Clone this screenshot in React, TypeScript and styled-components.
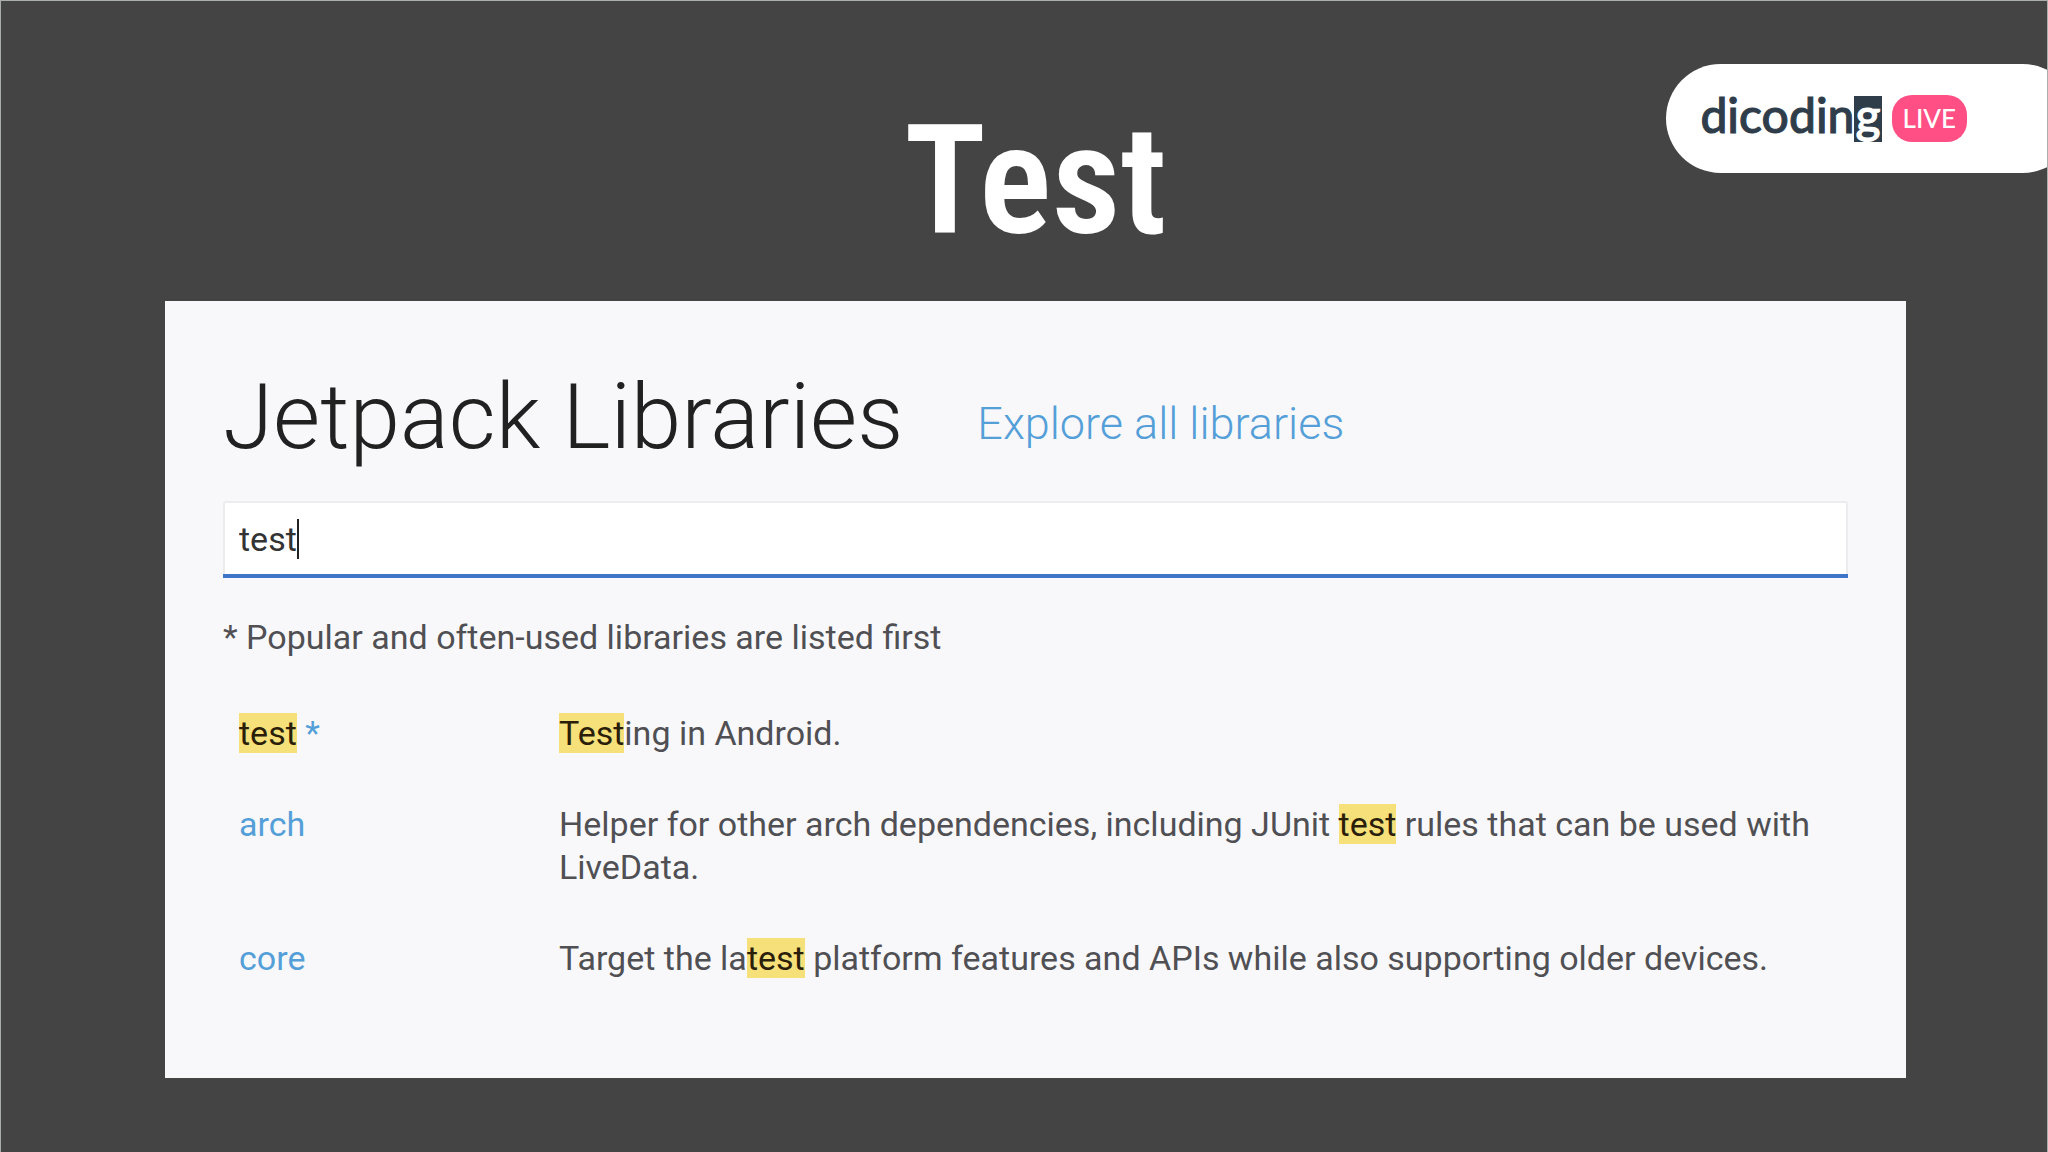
import React, { useState } from "react";
import styled, { createGlobalStyle } from "styled-components";

const GlobalStyle = createGlobalStyle`
  *, *::before, *::after { box-sizing: border-box; }
  body { margin: 0; background: #444445; font-family: Roboto, "Liberation Sans", sans-serif; }
`;

const Slide = styled.div`
  position: relative;
  min-height: 100vh;
  padding: 96px 141px 74px 164px;
  overflow: hidden;
  border: 1px solid #a9adad;
  background: #444445;
`;

const Title = styled.h1`
  margin: 0 0 36px;
  color: #fff;
  font-family: "Roboto Condensed", Roboto, sans-serif;
  font-size: 152px;
  font-weight: 600;
  line-height: 168px;
  text-align: center;
`;

const Badge = styled.div`
  position: absolute;
  top: 63px;
  right: -30px;
  display: flex;
  align-items: center;
  gap: 10px;
  height: 109px;
  padding: 0 110px 0 34px;
  border-radius: 55px;
  background: #fff;
`;

const Wordmark = styled.span`
  display: flex;
  color: #2f3d4b;
  font-family: Lato, sans-serif;
  font-size: 48px;
  font-weight: 500;
  line-height: 38px;
  -webkit-text-stroke: 1px currentColor;
`;

const Inverted = styled.span`
  padding: 0 1px 8px;
  background: #2f3d4b;
  color: #fff;
`;

const Live = styled.span`
  padding: 0 11px;
  border-radius: 20px;
  background: #ff4f85;
  color: #fff;
  font-family: Lato, sans-serif;
  font-size: 26px;
  font-weight: 500;
  line-height: 47px;
`;

const Panel = styled.main`
  padding: 60px 58px 74px;
  background: #f8f8fb;
`;

const PanelHead = styled.div`
  display: flex;
  align-items: center;
  gap: 74px;
`;

const Heading = styled.h2`
  margin: 0;
  color: #212121;
  font-size: 91px;
  font-weight: 300;
  line-height: 112px;
`;

const Explore = styled.a`
  padding-top: 12px;
  color: #559fd8;
  font-size: 45px;
  font-weight: 300;
  text-decoration: none;
`;

const Field = styled.label`
  display: flex;
  align-items: center;
  height: 77px;
  margin-top: 28px;
  padding: 0 16px 2px;
  border-radius: 3px 3px 0 0;
  background: #fff;
  box-shadow: inset 0 -4px #3f75c8, inset 0 0 0 2px #ececee;
  cursor: text;
`;

const Query = styled.input`
  field-sizing: content;
  padding: 0;
  border: 0;
  outline: 0;
  background: none;
  color: #333;
  font-family: inherit;
  font-size: 34px;
`;

const Caret = styled.span`
  width: 2px;
  height: 40px;
  background: #222;
`;

const Note = styled.p`
  margin: 38px 0 29px;
  color: #505054;
  font-size: 34px;
  line-height: 43px;
`;

const Results = styled.table`
  width: 100%;
  border-collapse: collapse;
  color: #505054;
  font-size: 34px;
  line-height: 43px;
`;

const NameCell = styled.th`
  width: 320px;
  padding: 24px 16px;
  font-weight: 400;
  text-align: left;
  vertical-align: top;
`;

const TextCell = styled.td`
  padding: 24px 16px;
  vertical-align: top;
`;

const LibraryLink = styled.a`
  color: #559fd8;
  text-decoration: none;
`;

const Highlight = styled.mark`
  background: #f5e07a;
  color: #2a1e08;
`;

const libraries = [
  { name: "test", popular: true, text: "Testing in Android." },
  {
    name: "arch",
    popular: false,
    text: "Helper for other arch dependencies, including JUnit test rules that can be used with LiveData.",
  },
  {
    name: "core",
    popular: false,
    text: "Target the latest platform features and APIs while also supporting older devices.",
  },
];

function Marked({ text }: { text: string }) {
  return (
    <>
      {text.split(/(test)/i).map((part, i) =>
        i % 2 ? <Highlight key={i}>{part}</Highlight> : part
      )}
    </>
  );
}

export default function App() {
  const [query, setQuery] = useState("test");
  return (
    <>
      <GlobalStyle />
      <Slide>
        <Title>Test</Title>
        <Badge>
          <Wordmark>
            dicodin<Inverted>g</Inverted>
          </Wordmark>
          <Live>LIVE</Live>
        </Badge>
        <Panel>
          <PanelHead>
            <Heading>Jetpack Libraries</Heading>
            <Explore href="#libraries">Explore all libraries</Explore>
          </PanelHead>
          <Field>
            <Query
              type="text"
              aria-label="Search libraries"
              value={query}
              onChange={(e) => setQuery(e.target.value)}
            />
            <Caret />
          </Field>
          <Note>* Popular and often-used libraries are listed first</Note>
          <Results id="libraries">
            <tbody>
              {libraries.map((lib) => (
                <tr key={lib.name}>
                  <NameCell scope="row">
                    <LibraryLink href={`#${lib.name}`}>
                      <Marked text={lib.name} />
                      {lib.popular && " *"}
                    </LibraryLink>
                  </NameCell>
                  <TextCell>
                    <Marked text={lib.text} />
                  </TextCell>
                </tr>
              ))}
            </tbody>
          </Results>
        </Panel>
      </Slide>
    </>
  );
}
